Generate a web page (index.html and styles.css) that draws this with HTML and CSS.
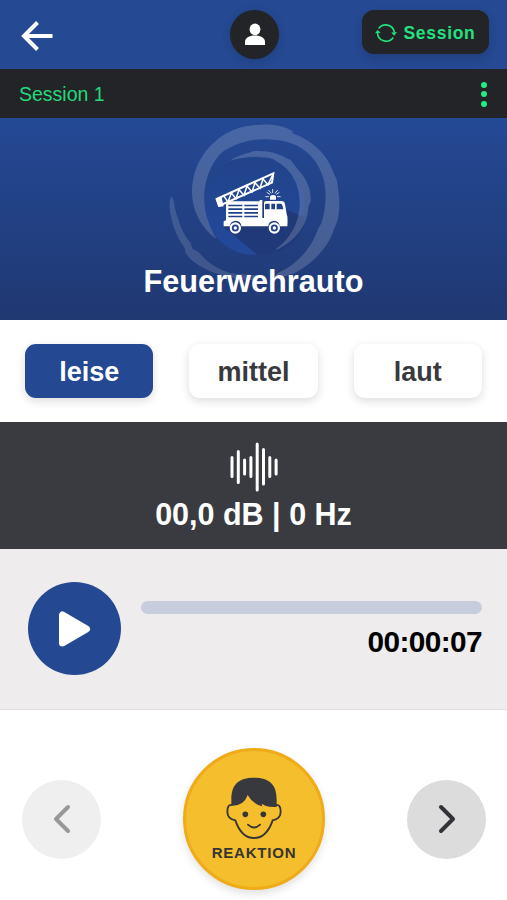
FILE: index.html
```html
<!DOCTYPE html>
<html lang="de">
<head>
<meta charset="utf-8">
<meta name="viewport" content="width=device-width, initial-scale=1">
<title>Feuerwehrauto</title>
<link rel="stylesheet" href="styles.css">
</head>
<body>
<header class="topbar">
  <button class="back" aria-label="Zurück"><svg width="34" height="32" viewBox="0 0 34 32" fill="none" stroke="#fff" stroke-width="4"><path d="M17.500 2.500 4 16l13.500 13.500M4 16h28.500"/></svg></button>
  <button class="profile" aria-label="Profil"><svg width="22" height="24" viewBox="0 0 22 24" fill="#fff"><ellipse cx="11" cy="6.300" rx="5.400" ry="5.900"/><path d="M1 22v-3c0-4 4-6.500 10-6.500s10 2.500 10 6.500v3z"/></svg></button>
  <button class="session-btn"><svg width="22" height="20" viewBox="0 0 22 20" fill="none" stroke="#25e07f" stroke-width="1.600"><path d="M3.700 5.500a8.700 8.700 0 0 1 15.600 3.500M2.500 9.500a8.700 8.700 0 0 0 15.800 5"/><path d="M0 10.200 2.500 6.900l3.300 2.800zM16.200 9.500l2.900 3.200 2.900-3.600z" fill="#25e07f" stroke="none"/></svg><span>Session</span></button>
</header>
<div class="subbar">
  <span>Session 1</span>
  <button class="dots" aria-label="Menü"><i></i><i></i><i></i></button>
</div>
<section class="hero">
  <svg class="art" width="207" height="202" viewBox="0 24 621 606">
    <defs><linearGradient id="disc" x1="0" y1="0" x2="0" y2="1"><stop offset="0" stop-color="#21438b"/><stop offset="1" stop-color="#23499b"/></linearGradient></defs>
    <circle cx="314" cy="285" r="150" fill="url(#disc)"/>
    <path d="M222 352 322 434C400 434 462 390 464 322L408 300 350 270z" fill="#203979"/>
    <g fill="#fff" fill-opacity=".17">
      <path d="M200 388C150 350 117 290 128 215C137 165 158 125 198 92C238 58 282 47 320 45C355 40 408 46 431 66L425 69C489 91 534 136 551 190L560 208C572 270 571 324 553 354C537 410 489 461 433 490L400 500 370 502 385 488C443 464 487 409 504 356L514 340C530 292 532 226 514 188C490 124 430 91 370 89C316 84 272 94 238 114L222 122 208 135 198 148C182 171 166 205 163 250C160 305 177 350 200 388Z"/>
      <path d="M240 152C262 137 285 132 310 124C348 120 385 129 412 146L421 149 447 182C473 210 484 244 482 274L475 291C474 342 440 388 386 417L375 419C418 390 448 340 449 282C451 226 423 177 382 156L369 147C330 138 286 139 240 152Z"/>
      <path d="M65 258C75 275 73 299 83 322C91 351 103 378 122 399L128 417 146 426C169 457 205 478 242 490L320 496 322 510C245 511 167 487 120 446L107 429 104 414C77 378 63 333 59 294Q57 270 65 258Z" opacity=".8"/>
    </g>
    <g fill="#fff">
      <path d="M228 274h101v-4h8v54h5v-45q0-6 6-6h47q8 0 10 9l5 30q4 8 2 37h-23a17 17 0 0 0-34 0h-81a17 17 0 0 0-34 0h-19v-15l7-3z"/>
      <circle cx="256" cy="354" r="17"/><circle cx="373" cy="354" r="17"/>
      <path d="M360 269v-7q0-7 9-7t9 7v7z"/>
    </g>
    <g fill="#21418a"><circle cx="256" cy="354" r="10.500"/><circle cx="373" cy="354" r="10.500"/>
      <path d="M347 281h12v17h-14v-15zM364 281h11v17h-11zM380 281h12q4 0 5 5l3 12h-20z"/>
      <path d="M235 284h42v5h-42zM235 295h42v5h-42zM235 306h42v5h-42zM235 317h42v5h-42zM283 284h41v5h-41zM283 295h41v5h-41zM283 306h41v5h-41zM283 317h41v5h-41z"/>
    </g>
    <g fill="#fff"><circle cx="256" cy="354" r="5"/><circle cx="373" cy="354" r="5"/></g>
    <path d="M350 247l10 6M355 240l9 10M368 237v12M383 240l-8 10M388 247l-9 6M346 260h11M381 260h11" stroke="#fff" stroke-width="2.500"/>
    <path d="M200 267 370 190 366 218 208 287z" fill="none" stroke="#fff" stroke-width="6"/>
    <path d="M197 266 214 259 221 289 205 291z" fill="#fff"/>
    <path d="M222 259l12 17 10-27 14 17 9-27 15 17 9-28 15 18 9-28 15 17 9-28 15 17 14-29" fill="none" stroke="#fff" stroke-width="4.500"/>
  </svg>
  <h1>Feuerwehrauto</h1>
</section>
<nav class="levels">
  <button class="level active">leise</button>
  <button class="level">mittel</button>
  <button class="level">laut</button>
</nav>
<section class="meter">
  <svg width="50" height="50" viewBox="0 0 50 50" stroke="#fff" stroke-width="3" stroke-linecap="round"><path d="M3 15.500v19M9.300 9.500v31M15.600 18v14M21.900 15.500v19M28.200 2v46M34.500 7.500v34.500M40.800 15.500v19M47.100 18v14"/></svg>
  <div class="reading">00,0 dB | 0 Hz</div>
</section>
<section class="player">
  <button class="play" aria-label="Abspielen"><svg width="32" height="36" viewBox="0 0 32 36"><path d="M3.500 4v28L27.500 18z" fill="#fff" stroke="#fff" stroke-width="7" stroke-linejoin="round"/></svg></button>
  <div class="track">
    <div class="bar"></div>
    <div class="time">00:00:07</div>
  </div>
</section>
<footer class="controls">
  <button class="step prev" aria-label="Vorheriges"><svg width="18" height="30" viewBox="0 0 18 30"><path d="M15 3 3 15l12 12"/></svg></button>
  <button class="reaction">
    <svg width="56" height="62" viewBox="0 0 168 186">
      <path d="M18 84Q4 82 4 104C4 119 12 127 28 130C39 162 57 183 84 183S129 162 140 130C156 127 164 119 164 104Q164 82 150 84" fill="none" stroke="#373536" stroke-width="5.500"/>
      <path d="M16 87V68C16 22 38 2 84 2S152 22 152 68V90Q130 91 118 86L107 80 109 88Q80 81 65 54Q54 87 16 87Z" fill="#37393f"/>
      <circle cx="58" cy="112" r="8.500" fill="#373536"/><circle cx="112" cy="112" r="8.500" fill="#373536"/>
      <path d="M66 143Q84 160 102 143" fill="none" stroke="#373536" stroke-width="5.500" stroke-linecap="round"/>
    </svg>
    <span>REAKTION</span>
  </button>
  <button class="step next" aria-label="Nächstes"><svg width="18" height="30" viewBox="0 0 18 30"><path d="m3 3 12 12L3 27"/></svg></button>
</footer>
</body>
</html>
```
FILE: styles.css
```css
* { box-sizing: border-box; }
body {
  margin: 0;
  height: 900px;
  display: flex;
  flex-direction: column;
  overflow: hidden;
  background: #fff;
  font-family: "Liberation Sans", Arial, sans-serif;
}
button {
  border: 0;
  padding: 0;
  background: none;
  font: inherit;
  color: inherit;
  display: flex;
  align-items: center;
  justify-content: center;
}
svg { display: block; flex: none; }

.topbar {
  height: 69px;
  flex: none;
  display: grid;
  grid-template-columns: 1fr 49px 1fr;
  align-items: center;
  padding: 0 18px 0 20px;
  background: #254992;
}
.back { justify-self: start; padding-top: 2px; }
.profile {
  width: 49px;
  height: 49px;
  border-radius: 50%;
  background: #222427;
  box-shadow: 0 2px 8px rgba(0, 0, 0, .15);
}
.session-btn {
  justify-self: end;
  align-self: start;
  margin-top: 10px;
  padding-top: 1px;
  width: 127px;
  height: 44px;
  gap: 6px;
  border-radius: 12px;
  background: #222427;
  color: #25e07f;
  font-size: 17.500px;
  font-weight: 700;
  letter-spacing: .7px;
  box-shadow: 0 4px 8px rgba(0, 0, 0, .14);
}
.session-btn span { padding-top: 2px; }

.subbar {
  height: 49px;
  flex: none;
  display: flex;
  align-items: center;
  justify-content: space-between;
  padding: 1px 20px 0 19px;
  background: #222427;
  color: #25d97c;
  font-size: 19.500px;
}
.dots { flex-direction: column; gap: 3.500px; }
.dots i { width: 6px; height: 6px; border-radius: 50%; background: #22ed82; }

.hero {
  height: 202px;
  flex: none;
  display: grid;
  justify-items: center;
  background: linear-gradient(#244995, #203872);
}
.art, .hero h1 { grid-area: 1 / 1; }
.hero h1 {
  margin: 0;
  align-self: end;
  padding-bottom: 21px;
  color: #fff;
  font-size: 30.700px;
  line-height: 34px;
}

.levels {
  height: 102px;
  flex: none;
  display: grid;
  grid-template-columns: repeat(3, 1fr);
  gap: 36px;
  padding: 24px 25px;
}
.level {
  padding-top: 3px;
  border-radius: 11px;
  background: #fff;
  color: #37393d;
  font-size: 27px;
  font-weight: 700;
  box-shadow: 0 3px 10px rgba(0, 0, 0, .14);
}
.level.active { background: #244891; color: #fff; }

.meter {
  height: 127px;
  flex: none;
  display: flex;
  flex-direction: column;
  align-items: center;
  padding-top: 20px;
  background: #3a3b40;
}
.reading {
  margin-top: 5px;
  color: #fff;
  font-size: 30.500px;
  font-weight: 700;
  line-height: 34px;
}

.player {
  height: 161px;
  flex: none;
  display: flex;
  align-items: flex-start;
  gap: 20px;
  padding: 33px 25px 0 28px;
  background: #eeecec;
  border-bottom: 1px solid #dedede;
}
.play {
  width: 93px;
  height: 93px;
  flex: none;
  border-radius: 50%;
  background: #244891;
}
.track { flex: 1; padding-top: 19px; }
.bar { height: 13px; border-radius: 7px; background: #c7cddc; }
.time {
  margin-top: 11px;
  text-align: right;
  font-size: 29.800px;
  font-weight: 700;
  line-height: 34px;
  letter-spacing: -.6px;
  color: #000;
}

.controls {
  flex: 1;
  display: flex;
  align-items: center;
  justify-content: space-between;
  padding: 28px 21px 0 22px;
}
.step {
  width: 79px;
  height: 79px;
  border-radius: 50%;
  background: #dcdcdc;
}
.step path {
  fill: none;
  stroke: #313337;
  stroke-width: 4;
  stroke-linecap: round;
  stroke-linejoin: round;
}
.step.prev { background: #efefef; }
.step.prev path { stroke: #989898; }
.reaction {
  width: 142px;
  height: 142px;
  flex-direction: column;
  gap: 5px;
  border: 3px solid #efab18;
  border-radius: 50%;
  background: #f4be2d;
  color: #37352f;
  font-size: 15px;
  font-weight: 700;
  letter-spacing: .8px;
  box-shadow: 0 4px 8px rgba(0, 0, 0, .12);
}
```
